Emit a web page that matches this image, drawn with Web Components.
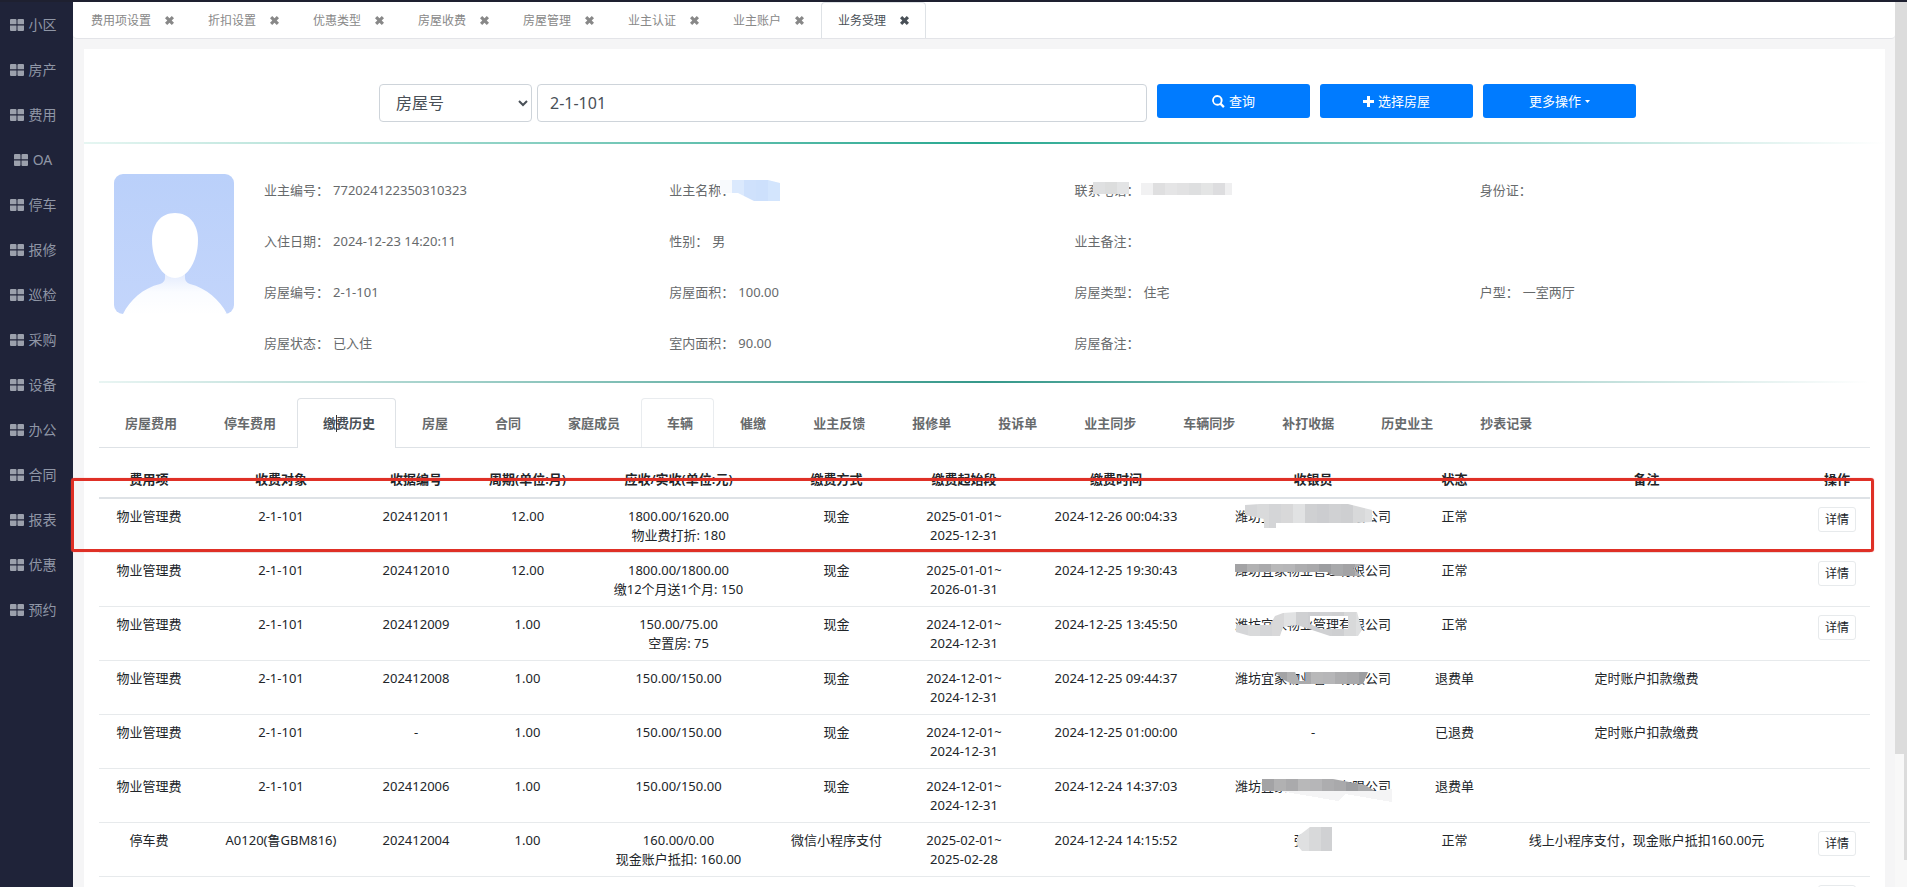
<!DOCTYPE html>
<html lang="zh-CN">
<head>
<meta charset="utf-8">
<title>业务受理</title>
<style>
  html, body {
    margin: 0;
    height: 100%;
    overflow: hidden;
  }
  body {
    font-family: "Noto Sans", "Noto Sans CJK SC", sans-serif;
    font-size: 13px;
    line-height: 19px;
    color: #676a6c;
    background: #f5f5f6;
  }
</style>
</head>
<body>
<app-shell>
  <side-nav slot="side" items="小区,房产,费用,OA,停车,报修,巡检,采购,设备,办公,合同,报表,优惠,预约"></side-nav>
  <page-tabs slot="tabs" items="费用项设置,折扣设置,优惠类型,房屋收费,房屋管理,业主认证,业主账户,业务受理" active="业务受理"></page-tabs>
  <search-bar></search-bar>
  <owner-profile>
    <info-field label="业主编号">772024122350310323</info-field>
    <info-field label="业主名称"><mosaic-patch width="42" shape="M-18-1H30L42 2V20H16L0 12H-18Z" shades="#f8fafd,#dbe9fd,#cfe1fc,#cde0fc,#d3e5fd,#e4f0fe"></mosaic-patch></info-field>
    <info-field label="联系电话"><mosaic-patch width="92" shape="M-51 1H-15V13H-51ZM-3 2H88V14H-3Z" shades="#dfe0e1,#dcdddd,#e3e4e5,#f3f3f4,#f1f1f2,#dfdfe0,#e5e5e6,#e2e2e3,#dedfe0,#e4e5e5,#dddddf,#efeff0"></mosaic-patch></info-field>
    <info-field label="身份证"></info-field>
    <info-field label="入住日期">2024-12-23 14:20:11</info-field>
    <info-field label="性别">男</info-field>
    <info-field label="业主备注"></info-field>
    <span></span>
    <info-field label="房屋编号">2-1-101</info-field>
    <info-field label="房屋面积">100.00</info-field>
    <info-field label="房屋类型">住宅</info-field>
    <info-field label="户型">一室两厅</info-field>
    <info-field label="房屋状态">已入住</info-field>
    <info-field label="室内面积">90.00</info-field>
    <info-field label="房屋备注"></info-field>
  </owner-profile>
  <detail-tabs items="房屋费用,停车费用,缴费历史,房屋,合同,家庭成员,车辆,催缴,业主反馈,报修单,投诉单,业主同步,车辆同步,补打收据,历史业主,抄表记录" active="缴费历史" hovered="车辆"></detail-tabs>
  <fee-table></fee-table>
</app-shell>

<script>
// every component has one open shadow root, filled from an html string
function attach(el, html) {
  const template = document.createElement("template");
  template.innerHTML = html;
  const root = el.attachShadow({mode: "open"});
  root.append(template.content.cloneNode(true));
  return root;
}

class AppShell extends HTMLElement {
  constructor() {
    super();
    attach(this, `<style>
      :host { display: flex; height: 100vh; overflow: hidden; border-top: 2px solid #1e2030; box-sizing: border-box; }
      .side { flex: 0 0 73px; background: #1f2339; }
      .content { flex: 1; min-width: 0; }
      .card { background: #fff; margin: 10px 10px 0 11px; padding-top: 35px; min-height: 100vh; }
      .bar { background: #f8f8f8; flex: none; }
      .bar div { background: #dcdcdc; }
      .inner { width: 9px; }
      .inner div { height: 85%; }
      .outer { width: 3px; }
      .outer div { height: 97%; }
    </style>
    <aside class="side"><slot name="side"></slot></aside>
    <main class="content">
      <slot name="tabs"></slot>
      <div class="card"><slot></slot></div>
    </main>
    <div class="bar inner"><div></div></div>
    <div class="bar outer"><div></div></div>`);
  }
}

class SideNav extends HTMLElement {
  constructor() {
    super();
    const links = this.getAttribute("items").split(",").map(name => `
      <a href="#"><svg width="14" height="12" viewBox="0 0 14 12"><path d="M1 0h4.5q1 0 1 1v4.2H0V1q0-1 1-1zM8.5 0H13q1 0 1 1v4.2H7.5V1q0-1 1-1zM0 6.6h6.5V11q0 1-1 1H1q-1 0-1-1zM7.5 6.6H14V11q0 1-1 1H8.5q-1 0-1-1z"/></svg>${name}</a>`).join("");
    attach(this, `<style>
      :host { display: block; }
      nav { display: flex; flex-direction: column; }
      a {
        display: flex; align-items: center; justify-content: center; gap: 5px;
        height: 45px; padding-right: 7px;
        color: #8f96a6; font-size: 14px; text-decoration: none;
      }
      svg { fill: #9ba0ac; }
    </style><nav>${links}</nav>`);
  }
}

class PageTabs extends HTMLElement {
  constructor() {
    super();
    const active = this.getAttribute("active");
    const tabs = this.getAttribute("items").split(",").map(name => `
      <div class="tab${name === active ? " active" : ""}">
        <a href="#">${name}</a>
        <button aria-label="关闭${name}"><svg width="9" height="9" viewBox="0 0 9 9"><path d="M2.2 0L4.5 2.3 6.8 0 9 2.2 6.7 4.5 9 6.8 6.8 9 4.5 6.7 2.2 9 0 6.8 2.3 4.5 0 2.2z"/></svg></button>
      </div>`).join("");
    attach(this, `<style>
      :host { display: flex; height: 37px; box-sizing: border-box; padding-left: 1px; background: #fff; border-bottom: 1px solid #e3e4e8; border-radius: 0 0 4px 4px; font-size: 12px; }
      .tab { display: flex; align-items: center; gap: 14px; padding: 0 16px; border: 1px solid transparent; border-bottom: 0; color: #888; }
      .tab.active { background: #fff; border-color: #dee2e6; border-radius: 4px 4px 0 0; color: #495057; }
      a { color: inherit; text-decoration: none; white-space: nowrap; }
      button { display: flex; padding: 0; border: 0; background: none; color: inherit; }
      svg { fill: currentColor; }
    </style>${tabs}`);
  }
}

class SearchBar extends HTMLElement {
  constructor() {
    super();
    attach(this, `<style>
      :host { display: block; }
      form { display: flex; align-items: flex-start; gap: 10px; padding: 0 249px 20px 295px; }
      .fields { display: flex; flex: 1; gap: 5px; }
      select, input {
        box-sizing: border-box; height: 38px; border: 1px solid #ced4da; border-radius: 4px;
        background: #fff; color: #495057; font: inherit; font-size: 16px;
      }
      select { flex: 0 0 153px; padding: 0 0 0 12px; }
      input { flex: 1; min-width: 0; padding: 0 12px; }
      button {
        flex: 0 0 153px; display: flex; align-items: center; justify-content: center; gap: 4px;
        height: 34px; border: 0; border-radius: 3px; background: #007bff; color: #fff; font: inherit;
      }
      svg { fill: currentColor; }
      .line { height: 2px; background: linear-gradient(to right, #e6f6f2, #28a890, #fff); }
    </style>
    <form>
      <div class="fields">
        <select aria-label="查询条件"><option>房屋号</option></select>
        <input type="text" aria-label="房屋号" value="2-1-101">
      </div>
      <button type="button"><svg width="13" height="13" viewBox="0 0 13 13"><path fill-rule="evenodd" d="M5.3 0a5.3 5.3 0 0 1 4.4 8.2l3 3-1.6 1.7-3-3A5.3 5.3 0 1 1 5.3 0zm0 2a3.4 3.4 0 1 0 0 6.8 3.4 3.4 0 0 0 0-6.8z"/></svg>查询</button>
      <button type="button"><svg width="11" height="11" viewBox="0 0 11 11"><path d="M4 0h3v4h4v3H7v4H4V7H0V4h4z"/></svg>选择房屋</button>
      <button type="button">更多操作<svg width="5" height="3" viewBox="0 0 5 3"><path d="M0 0h5L2.5 3z"/></svg></button>
    </form>
    <div class="line"></div>`);
  }
}

class OwnerProfile extends HTMLElement {
  constructor() {
    super();
    attach(this, `<style>
      :host { display: block; margin: 0 15px; }
      .body { display: flex; padding: 30px 0 67px 15px; height: 140px; }
      .avatar { flex: none; border-radius: 9px; }
      .grid { flex: 1; display: grid; grid-template-columns: repeat(4, 1fr); grid-auto-rows: 51px; padding: 7px 0 0 30px; margin-right: -15px; }
      .line { height: 2px; background: linear-gradient(to right, #e9f5f3, #35988a, #fff); }
    </style>
    <div class="body">
      <svg class="avatar" width="120" height="140" viewBox="0 0 120 140">
        <defs>
          <linearGradient id="bg" x2="0" y2="1"><stop stop-color="#bad0fa"/><stop offset="1" stop-color="#c3d5fb"/></linearGradient>
          <linearGradient id="bust" x2="0" y2="1"><stop stop-color="#dfe8fd"/><stop offset=".5" stop-color="#fafcff"/><stop offset="1" stop-color="#fff"/></linearGradient>
        </defs>
        <rect width="120" height="140" fill="url(#bg)"/>
        <path d="M51 96V104Q51 108 46 110C29 114 16 126 9 140H113C106 126 92 114 76 110Q71 108 71 104V96Z" fill="url(#bust)"/>
        <path d="M61 39C75 39 84 50 84 66C84 86 74 104 61 104S38 86 38 66C38 50 47 39 61 39Z" fill="#fff"/>
      </svg>
      <div class="grid"><slot></slot></div>
    </div>
    <div class="line"></div>`);
  }
}

class InfoField extends HTMLElement {
  constructor() {
    super();
    attach(this, `<style>:host { display: flex; gap: 4px; align-items: flex-start; white-space: nowrap; }</style>
      <span>${this.getAttribute("label")}：</span><span><slot></slot></span>`);
  }
}

// pixelated cover over a private value: 12px cells, clipped to a hand drawn shape
class MosaicPatch extends HTMLElement {
  constructor() {
    super();
    const shades = this.getAttribute("shades").split(",");
    const start = this.getAttribute("shape").match(/-?\d+/)[0] * 1;
    let cells = "";
    for (let i = 0; i < 20; i++) {
      cells += `<rect x="${start + i * 12}" y="-6" width="12" height="36" fill="${shades[i % shades.length]}"/>`;
    }
    attach(this, `<style>
      :host { display: inline-block; position: relative; min-width: ${this.getAttribute("width") || 0}px; height: 19px; text-align: left; white-space: nowrap; }
      svg { position: absolute; left: 0; top: 0; overflow: visible; }
    </style><slot></slot>
    <svg width="1" height="1" shape-rendering="crispEdges"><clipPath id="c"><path clip-rule="evenodd" d="${this.getAttribute("shape")}"/></clipPath>
    <path d="${this.getAttribute("haze") || ""}" fill="#f4f4f5"/><g clip-path="url(#c)">${cells}</g></svg>`);
  }
}

class DetailTabs extends HTMLElement {
  constructor() {
    super();
    const active = this.getAttribute("active");
    const hovered = this.getAttribute("hovered");
    const tabs = this.getAttribute("items").split(",").map(name => {
      const state = name === active ? "active" : name === hovered ? "hovered" : "";
      return `<a href="#" class="${state}">${name}</a>`;
    }).join("");
    attach(this, `<style>
      :host { display: flex; height: 50px; box-sizing: border-box; margin: 15px 15px 0; border-bottom: 1px solid #dee2e6; }
      a {
        padding: 15px 20px 0 25px; border: 1px solid transparent; border-bottom: 0; border-radius: 4px 4px 0 0;
        color: #676a6c; font-weight: 600; text-decoration: none; white-space: nowrap;
      }
      a.active { position: relative; border-color: #dee2e6; background: #fff; color: #495057; margin-bottom: -1px; }
      a.hovered { border-color: #e9ecef; }
      /* text caret left by a click inside the label */
      a.active::after { content: ""; position: absolute; left: 38px; top: 16px; width: 1px; height: 17px; background: #333; }
    </style>${tabs}`);
  }
}

const light = "#d5d6d8,#d9dadb,#d4d5d7,#d8d8d9,#e1e2e3,#cfd0d2,#cccdd0,#d0d1d3,#cecfd1,#d8d9da,#dedfe0";
const dark = "#a3a3a5,#b1b1b2,#aaaaac,#b8b8b9,#b6b6b8,#adadaf,#a9a9ab,#9d9ea1,#a8a9ab";
const company = (shape, shades, haze = "") =>
  `<mosaic-patch shape="${shape}" haze="${haze}" shades="${shades}">潍坊宜家物业管理有限公司</mosaic-patch>`;

const head = ["费用项", "收费对象", "收据编号", "周期(单位:月)", "应收/实收(单位:元)", "缴费方式", "缴费起始段", "缴费时间", "收银员", "状态", "备注", "操作"];
const widths = [100, 164, 106, 117, 185, 131, 124, 180, 214, 69, 315, 66];
const detail = "<button>详情</button>";
const rows = [
  ["物业管理费", "2-1-101", "202412011", "12.00", "1800.00/1620.00<br>物业费打折: 180", "现金", "2025-01-01~<br>2025-12-31", "2024-12-26 00:04:33",
    company("M10-2L25-3H113L137 3V15L120 16H41V21H29V12L10 8Z", light), "正常", "", detail],
  ["物业管理费", "2-1-101", "202412010", "12.00", "1800.00/1800.00<br>缴12个月送1个月: 150", "现金", "2025-01-01~<br>2026-01-31", "2024-12-25 19:30:43",
    company("M0 3H130L118 7L126 15H100L92 11H0Z", dark), "正常", "", detail],
  ["物业管理费", "2-1-101", "202412009", "1.00", "150.00/75.00<br>空置房: 75", "现金", "2024-12-01~<br>2024-12-31", "2024-12-25 13:45:50",
    company("M1 10H35L40 1L48-2L62-3H122L127 15L123 21H95L62 10L48 12L45 21H15L1 17ZM75 1H113V14H86L75 9Z", light), "正常", "", detail],
  ["物业管理费", "2-1-101", "202412008", "1.00", "150.00/150.00", "现金", "2024-12-01~<br>2024-12-31", "2024-12-25 09:44:37",
    company("M40 3H133L128 15H57L47 10ZM60 3H71V12H64Z", dark), "退费单", "定时账户扣款缴费", ""],
  ["物业管理费", "2-1-101", "-", "1.00", "150.00/150.00", "现金", "2024-12-01~<br>2024-12-31", "2024-12-25 01:00:00", "-", "已退费", "定时账户扣款缴费", ""],
  ["物业管理费", "2-1-101", "202412006", "1.00", "150.00/150.00", "现金", "2024-12-01~<br>2024-12-31", "2024-12-24 14:37:03",
    company("M27 2H98L130 8L140 14H27Z", dark, "M45 14H140L157 12V25L110 17L103 24Z"), "退费单", "", ""],
  ["停车费", "A0120(鲁GBM816)", "202412004", "1.00", "160.00/0.00<br>现金账户抵扣: 160.00", "微信小程序支付", "2025-02-01~<br>2025-02-28", "2024-12-24 14:15:52",
    `<mosaic-patch width="39" shape="M3 6L16-4H38V20H8L3 14Z" shades="#dfe0e1,#d8d9da,#d0d1d3">张</mosaic-patch>`, "正常", "线上小程序支付，现金账户抵扣160.00元", detail],
  ["", "", "", "", "", "", "", "", "", "", "", "<button aria-label='详情'></button>"]
];

class FeeTable extends HTMLElement {
  constructor() {
    super();
    const cols = widths.map(w => `<col style="width:${w}px">`).join("");
    const body = rows.map(row => `<tr>${row.map(cell => `<td>${cell}</td>`).join("")}</tr>`).join("");
    attach(this, `<style>
      :host { display: block; position: relative; margin: 14px 15px 0; color: #212529; }
      table { width: 100%; table-layout: fixed; border-collapse: separate; border-spacing: 0; text-align: center; }
      th { padding: 8px 0; border-bottom: 2px solid #dee2e6; font-weight: 600; white-space: nowrap; }
      td { height: 38px; padding: 8px 0 7px; border-bottom: 1px solid #e7eaec; vertical-align: top; white-space: nowrap; }
      button {
        box-sizing: border-box; width: 38px; height: 25px; padding: 0; border: 1px solid #e7eaec; border-radius: 3px;
        background: #fff; color: #212529; font: inherit; font-size: 12px; vertical-align: top;
      }
      .mark { position: absolute; left: -28px; right: -4px; top: 16px; height: 68px; border: 3px solid #df3026; border-radius: 3px; box-shadow: 0 0 1px #f66; pointer-events: none; }
    </style>
    <table><colgroup>${cols}</colgroup>
      <thead><tr>${head.map(h => `<th>${h}</th>`).join("")}</tr></thead>
      <tbody>${body}</tbody>
    </table>
    <div class="mark"></div>`);
  }
}

customElements.define("app-shell", AppShell);
customElements.define("side-nav", SideNav);
customElements.define("page-tabs", PageTabs);
customElements.define("search-bar", SearchBar);
customElements.define("owner-profile", OwnerProfile);
customElements.define("info-field", InfoField);
customElements.define("mosaic-patch", MosaicPatch);
customElements.define("detail-tabs", DetailTabs);
customElements.define("fee-table", FeeTable);
</script>
</body>
</html>
